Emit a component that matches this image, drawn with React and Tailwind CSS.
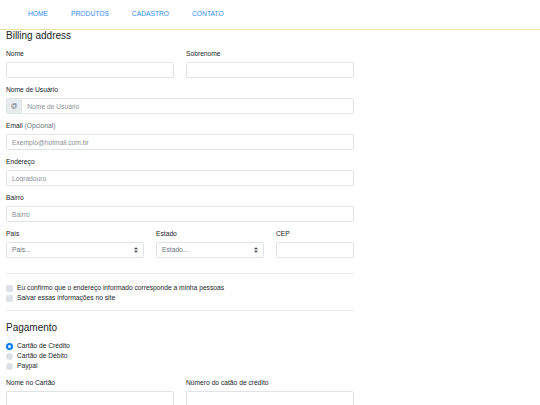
import React from "react";

const NAV = ["HOME", "PRODUTOS", "CADASTRO", "CONTATO"];

const inputCls =
  "block w-full h-[16px] rounded-[2px] border border-[#e0e3e6] bg-white px-[5px] text-[6.7px] text-[#495057] placeholder:text-[#8a9097] outline-none";

function Label({ children }) {
  return <label className="block text-[6.7px] leading-[10px] mb-[3px] text-[#212529]">{children}</label>;
}

function Field({ label, placeholder, className = "" }) {
  return (
    <div className={"mb-[7px] " + className}>
      <Label>{label}</Label>
      <input className={inputCls} placeholder={placeholder} />
    </div>
  );
}

function Select({ label, placeholder }) {
  return (
    <div className="mb-[7px]">
      <Label>{label}</Label>
      <div className="flex items-center justify-between h-[16px] rounded-[2px] border border-[#e0e3e6] bg-white px-[5px] text-[6.7px] text-[#6c757d]">
        <span>{placeholder}</span>
        <svg width="4" height="6" viewBox="0 0 4 6">
          <path d="M0 2.3 L2 0.3 L4 2.3 Z M0 3.7 L2 5.7 L4 3.7 Z" fill="#343a40" />
        </svg>
      </div>
    </div>
  );
}

function Check({ children }) {
  return (
    <div className="flex items-center h-[10px] text-[6.7px] text-[#212529]">
      <span className="w-[7px] h-[7px] rounded-[1.5px] bg-[#dee2e6] mr-[4px]" />
      {children}
    </div>
  );
}

function Radio({ checked, children }) {
  return (
    <div className="flex items-center h-[10px] text-[6.7px] text-[#212529]">
      {checked ? (
        <span className="w-[7px] h-[7px] rounded-full bg-[#007bff] mr-[4px] flex items-center justify-center">
          <span className="w-[3px] h-[3px] rounded-full bg-white" />
        </span>
      ) : (
        <span className="w-[7px] h-[7px] rounded-full bg-[#dee2e6] mr-[4px]" />
      )}
      {children}
    </div>
  );
}

export default function App() {
  return (
    <div className="w-[540px] h-[405px] overflow-hidden bg-white" style={{ fontFamily: '"Liberation Sans", Arial, sans-serif' }}>
      {/* nav */}
      <nav className="h-[30px] border-b border-[#f1e2a6] flex items-center pl-[28px] gap-[23px] text-[6.7px] text-[#2f8cf3]">
        {NAV.map((n) => (
          <span key={n}>{n}</span>
        ))}
      </nav>

      <div className="w-[348px] ml-[6px]">
        <h4 className="text-[10px] leading-[12px] text-[#212529] mb-[7px]">Billing address</h4>

        <div className="grid grid-cols-2 gap-x-[12px]">
          <Field label="Nome" />
          <Field label="Sobrenome" />
        </div>

        <div className="mb-[7px]">
          <Label>Nome de Usuário</Label>
          <div className="flex h-[16px]">
            <span className="w-[17px] flex items-center justify-center rounded-l-[2px] border border-[#e0e3e6] bg-[#e9ecef] text-[6.7px] text-[#6c757d]">
              @
            </span>
            <input className={inputCls + " rounded-l-none border-l-0 h-[16px]"} placeholder="Nome de Usuário" />
          </div>
        </div>

        <Field
          label={
            <>
              Email <span className="text-[#6c757d]">(Opcional)</span>
            </>
          }
          placeholder="Exemplo@hotmail.com.br"
        />
        <Field label="Endereço" placeholder="Logradouro" />
        <Field label="Bairro" placeholder="Bairro" />

        <div className="grid grid-cols-[138px_108px_78px] gap-x-[12px]">
          <Select label="País" placeholder="Pais..." />
          <Select label="Estado" placeholder="Estado..." />
          <Field label="CEP" />
        </div>

        <hr className="border-[#e9ecef] mt-[8px] mb-[9px]" />

        <Check>Eu confirmo que o endereço informado corresponde a minha pessoas</Check>
        <Check>Salvar essas informações no site</Check>

        <hr className="border-[#e9ecef] mt-[7px] mb-[11px]" />

        <h4 className="text-[10px] leading-[12px] text-[#212529] mb-[7px]">Pagamento</h4>

        <Radio checked>Cartão de Crédito</Radio>
        <Radio>Cartão de Débito</Radio>
        <Radio>Paypal</Radio>

        <div className="grid grid-cols-2 gap-x-[12px] mt-[7px]">
          <Field label="Nome no Cartão" />
          <Field label="Número do catão de crédito" />
        </div>
      </div>
    </div>
  );
}
